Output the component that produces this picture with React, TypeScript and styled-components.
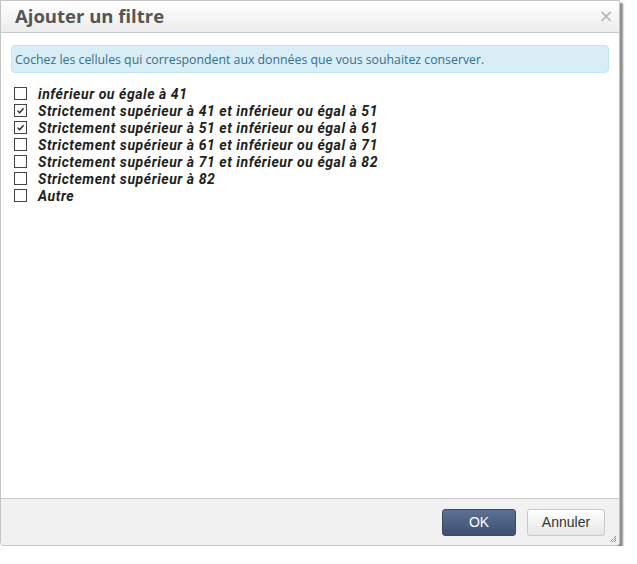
import styled, { createGlobalStyle } from 'styled-components'
import { useState } from 'react'

const GlobalStyle = createGlobalStyle`
  html, body {
    margin: 0;
    padding: 0;
    background: #ffffff;
  }
  body {
    font-family: "Open Sans", "DejaVu Sans", sans-serif;
  }
`

const options = [
  'inférieur ou égale à 41',
  'Strictement supérieur à 41 et inférieur ou égal à 51',
  'Strictement supérieur à 51 et inférieur ou égal à 61',
  'Strictement supérieur à 61 et inférieur ou égal à 71',
  'Strictement supérieur à 71 et inférieur ou égal à 82',
  'Strictement supérieur à 82',
  'Autre',
]

const App = () => {
  const [checked, setChecked] = useState<boolean[]>([false, true, true, false, false, false, false])

  const toggle = (i: number) => {
    setChecked((prev) => prev.map((v, j) => (j === i ? !v : v)))
  }

  return (
    <>
      <GlobalStyle />
      <Dialog>
        <Header>
          <Title>Ajouter un filtre</Title>
          <Close>×</Close>
        </Header>
        <Body>
          <Alert>Cochez les cellules qui correspondent aux données que vous souhaitez conserver.</Alert>
          <List>
            {options.map((label, i) => (
              <Row key={label} onClick={() => toggle(i)}>
                <Box>
                  {checked[i] && (
                    <svg width="9" height="9" viewBox="0 0 9 9">
                      <path d="M1.5 4.6 L3.6 6.8 L7.6 2.2" fill="none" stroke="#222" strokeWidth="1.3" />
                    </svg>
                  )}
                </Box>
                <Label>{label}</Label>
              </Row>
            ))}
          </List>
        </Body>
        <Footer>
          <PrimaryButton>OK</PrimaryButton>
          <Button>Annuler</Button>
          <Grip>
            <svg width="8" height="8" viewBox="0 0 8 8">
              <path d="M7 1 L1 7 M7 3 L3 7 M7 5 L5 7" stroke="#555" strokeWidth="1" strokeDasharray="1 1" />
            </svg>
          </Grip>
        </Footer>
      </Dialog>
    </>
  )
}

const Dialog = styled.div`
  width: 618px;
  height: 544px;
  display: flex;
  flex-direction: column;
  border: 1px solid #c4c4c4;
  border-radius: 0 0 4px 4px;
  background: #fff;
  box-shadow: 3px 3px 2px rgba(0, 0, 0, 0.45);
  overflow: hidden;
`

const Header = styled.div`
  height: 32px;
  display: flex;
  align-items: center;
  justify-content: space-between;
  padding: 0 4px 2px 14px;
  box-sizing: border-box;
  background: linear-gradient(to bottom, #ffffff, #ececec);
  border-bottom: 1px solid #c8c8c8;
`

const Title = styled.h3`
  margin: 0;
  font-size: 18.5px;
  font-weight: 700;
  color: #555;
  line-height: 28px;
`

const Close = styled.span`
  font-family: "DejaVu Sans", sans-serif;
  font-size: 18px;
  color: #b5b5b5;
  width: 18px;
  text-align: center;
  line-height: 28px;
`

const Body = styled.div`
  flex: 1;
  padding: 12px 10px 0 10px;
`

const Alert = styled.div`
  height: 26px;
  display: flex;
  align-items: center;
  padding: 0 3px;
  background: #d9edf7;
  border: 1px solid #bce8f1;
  border-radius: 4px;
  color: #31708f;
  font-size: 12.3px;
`

const List = styled.div`
  margin-top: 12px;
  padding-left: 3px;
  display: flex;
  flex-direction: column;
`

const Row = styled.div`
  height: 17px;
  display: flex;
  align-items: center;
  gap: 11px;
  cursor: pointer;
`

const Box = styled.span`
  flex: none;
  width: 11px;
  height: 11px;
  border: 1px solid #444;
  background: #fff;
  display: flex;
  align-items: center;
  justify-content: center;
`

const Label = styled.span`
  font-family: Roboto, "Open Sans", sans-serif;
  font-size: 14px;
  font-weight: 700;
  font-style: italic;
  letter-spacing: 0.55px;
  color: #1e1e1e;
  line-height: 17px;
  padding-top: 1px;
`

const Footer = styled.div`
  position: relative;
  height: 46px;
  display: flex;
  align-items: center;
  justify-content: flex-end;
  gap: 11px;
  padding-right: 14px;
  background: #f1f1f1;
  border-top: 1px solid #c8c8c8;
`

const Button = styled.button`
  height: 27px;
  min-width: 78px;
  padding: 0 12px;
  font-family: "Liberation Sans", Arial, sans-serif;
  font-size: 14px;
  color: #333;
  background: linear-gradient(to bottom, #ffffff, #e6e6e6);
  border: 1px solid #c8c8c8;
  border-radius: 3px;
  cursor: pointer;
`

const PrimaryButton = styled(Button)`
  min-width: 74px;
  color: #fff;
  background: linear-gradient(to bottom, #5c7194, #3d5071);
  border-color: #3a4b68;
`

const Grip = styled.span`
  position: absolute;
  right: 2px;
  bottom: 2px;
  display: flex;
`

export default App
